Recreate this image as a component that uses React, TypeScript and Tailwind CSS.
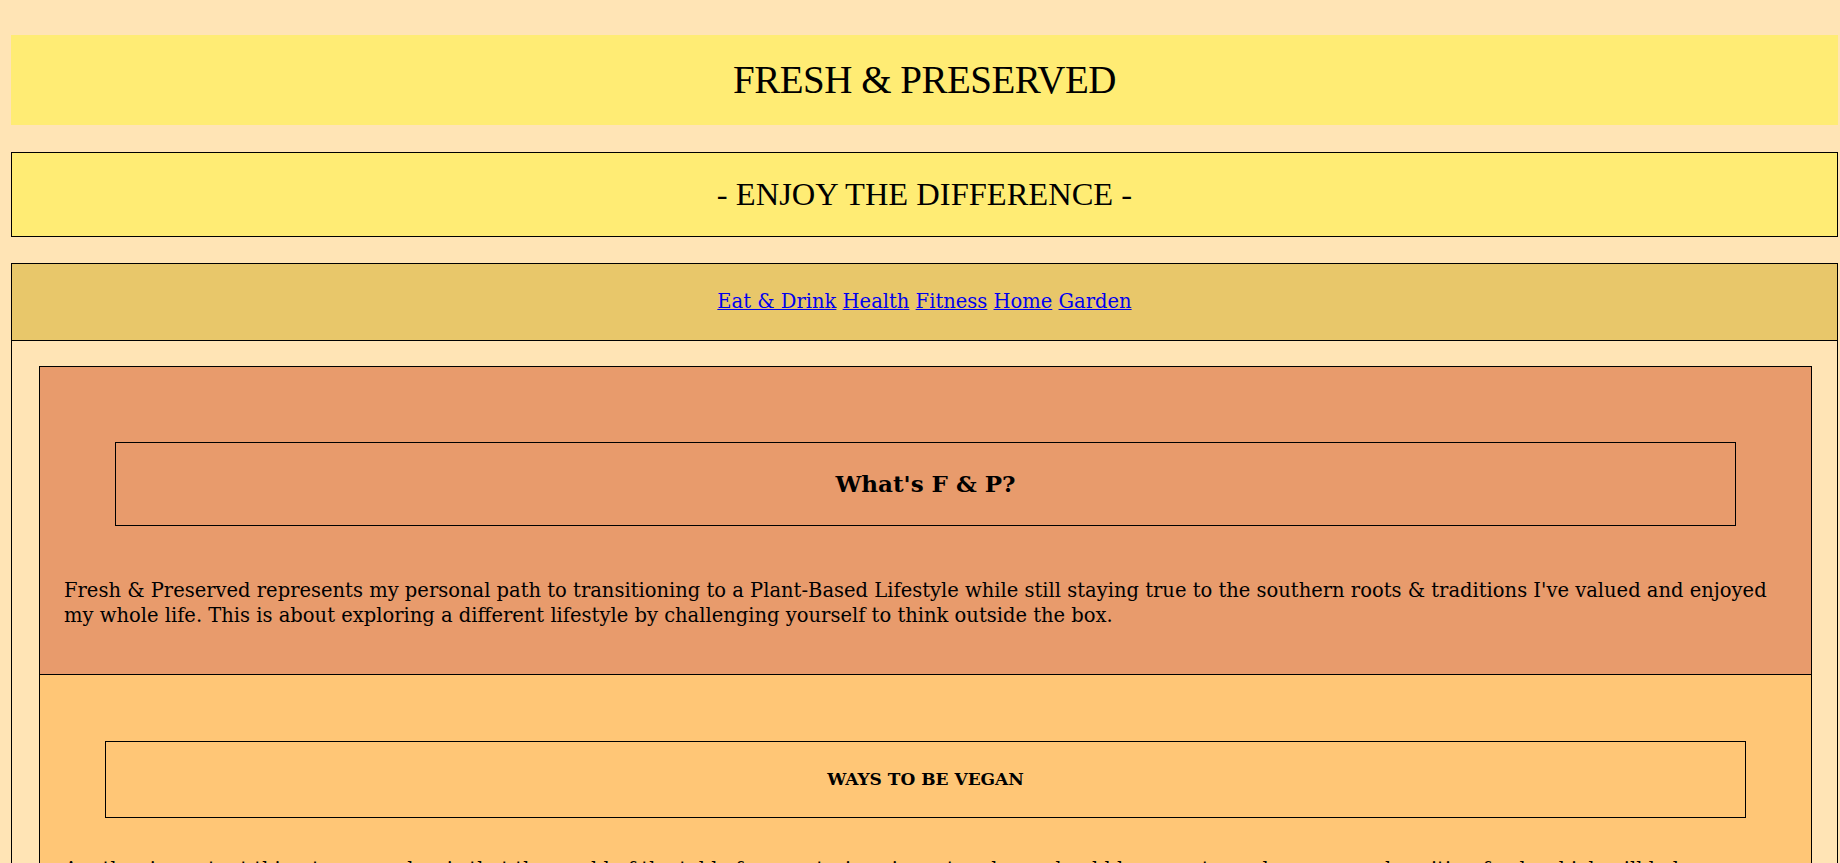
const links = ["Eat & Drink", "Health", "Fitness", "Home", "Garden"];

export default function App() {
  return (
    <div className="min-h-[863px] bg-[#ffe4b5] pt-[35px] text-black font-['DejaVu_Serif',serif]">
      <div className="ml-[11px] mr-[2px]">
        <header className="flex h-[90px] items-center justify-center bg-[#ffec74]">
          <h1 className="text-[39px] font-normal tracking-[-0.5px] font-['Liberation_Serif',serif]">FRESH &amp; PRESERVED</h1>
        </header>

        <div className="mt-[27px] flex h-[85px] items-center justify-center border border-black bg-[#ffec74]">
          <h2 className="text-[32.5px] font-normal font-['Liberation_Serif',serif]">- ENJOY THE DIFFERENCE -</h2>
        </div>

        <div className="mt-[26px] border border-black">
          <nav className="flex h-[77px] items-center justify-center border-b border-black bg-[#e8c76a] text-[19.5px]">
            <div>
              {links.map((l, i) => (
                <span key={l}>
                  <a href="#" className="text-[#0000ee] underline">
                    {l}
                  </a>
                  {i < links.length - 1 ? " " : ""}
                </span>
              ))}
            </div>
          </nav>

          <main className="pl-[27px] pr-[25px] pt-[25px]">
            <section className="border border-black bg-[#e89b6c] pt-[75px] pb-[46px]">
              <div className="mx-[75px] flex h-[84px] items-center justify-center border border-black">
                <h3 className="text-[23px] font-bold">What's F &amp; P?</h3>
              </div>
              <p className="mt-[52px] px-6 text-[19.5px] leading-[25px]">
                Fresh &amp; Preserved represents my personal path to transitioning to a Plant-Based Lifestyle while
                still staying true to the southern roots &amp; traditions I've valued and enjoyed my whole life. This is
                about exploring a different lifestyle by challenging yourself to think outside the box.
              </p>
            </section>

            <section className="-mt-px border border-black bg-[#ffc676] pt-[66px] pb-10">
              <div className="mx-[65px] flex h-[77px] items-center justify-center border border-black">
                <h4 className="text-[17px] font-bold">WAYS TO BE VEGAN</h4>
              </div>
              <p className="mt-[39px] px-6 text-[19.5px] leading-[25px]">
                Another important thing to remember is that the world of the table for vegetarians is vast and you
                should be open to explore new and exciting foods which will help you transition to a more healthy and
                plant-based lifestyle that you will enjoy for many years to come.
              </p>
            </section>
          </main>
        </div>
      </div>
    </div>
  );
}
